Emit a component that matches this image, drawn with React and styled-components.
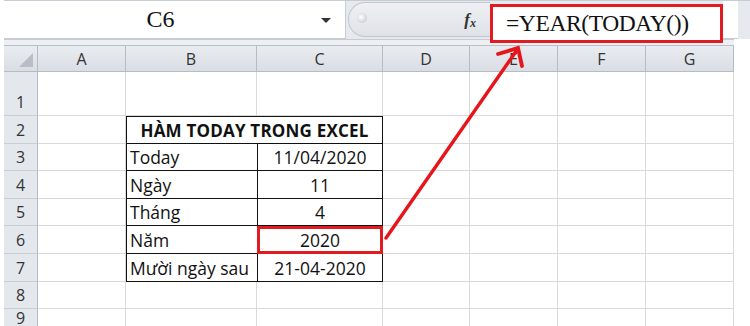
import React from "react";
import styled, { createGlobalStyle } from "styled-components";

const GlobalStyle = createGlobalStyle`
  html, body {
    margin: 0;
    padding: 0;
    background: #fff;
  }
  body {
    font-family: "Open Sans", "Liberation Sans", sans-serif;
  }
`;

const COLS = ["A", "B", "C", "D", "E", "F", "G"];
const COL_WIDTHS = [88, 131, 126, 87, 88, 88, 88];
const ROW_HEIGHTS = [44, 28, 27, 28, 27, 28, 28, 27, 18];

// table contents, keyed by row number
const TABLE = {
  3: ["Today", "11/04/2020"],
  4: ["Ngày", "11"],
  5: ["Tháng", "4"],
  6: ["Năm", "2020"],
  7: ["Mười ngày sau", "21-04-2020"],
};

const App = () => {
  return (
    <Page>
      <GlobalStyle />
      <FormulaBar>
        <NameBox>
          <NameText>C6</NameText>
          <DropArrow />
        </NameBox>
        <ButtonPill>
          <PillKnob />
          <FxLabel>
            f<sub>x</sub>
          </FxLabel>
        </ButtonPill>
        <FormulaInput>=YEAR(TODAY())</FormulaInput>
        <BarTail />
      </FormulaBar>
      <Splitter />

      <Sheet>
        <Corner>
          <CornerTriangle />
        </Corner>
        {COLS.map((c) => (
          <ColHeader key={c}>{c}</ColHeader>
        ))}

        {ROW_HEIGHTS.map((h, i) => {
          const row = i + 1;
          return (
            <React.Fragment key={row}>
              <RowHeader $tall={row === 1}>{row}</RowHeader>
              {row === 2 ? (
                <>
                  <Cell />
                  <TitleCell>HÀM TODAY TRONG EXCEL</TitleCell>
                  <Cell />
                  <Cell />
                  <Cell />
                  <Cell />
                </>
              ) : (
                COLS.map((c, ci) => {
                  const data = TABLE[row];
                  if (data && ci === 1) {
                    return (
                      <TableCell key={c} $bottom={row === 7}>
                        {data[0]}
                      </TableCell>
                    );
                  }
                  if (data && ci === 2) {
                    return (
                      <TableCell
                        key={c}
                        $center
                        $right
                        $bottom={row === 7}
                        $selected={row === 6}
                      >
                        {data[1]}
                      </TableCell>
                    );
                  }
                  return <Cell key={c} />;
                })
              )}
            </React.Fragment>
          );
        })}
      </Sheet>

      <ArrowLayer width="750" height="326" viewBox="0 0 750 326">
        <path
          d="M386 238 L517 50"
          stroke="#e8141c"
          strokeWidth="3.4"
          strokeLinecap="round"
          fill="none"
        />
        <path
          d="M498 54 L518 48 L522 66"
          stroke="#e8141c"
          strokeWidth="3.8"
          strokeLinecap="round"
          strokeLinejoin="miter"
          fill="none"
        />
      </ArrowLayer>
    </Page>
  );
};

export default App;

const Page = styled.div`
  position: relative;
  width: 750px;
  height: 326px;
  overflow: hidden;
  background: #fff;
`;

const FormulaBar = styled.div`
  display: flex;
  align-items: flex-start;
  height: 38px;
  margin-left: 4px;
  border-top: 1px solid #c6ccd4;
  background: #e6e9ee;
`;

const NameBox = styled.div`
  display: flex;
  align-items: center;
  align-self: stretch;
  width: 341px;
  background: #fff;
  border-right: 1px solid #c6ccd4;
  border-bottom: 1px solid #c6ccd4;
`;

const NameText = styled.div`
  flex: 1;
  text-align: center;
  font-family: "Liberation Serif", serif;
  font-size: 24px;
  color: #111;
  padding-left: 4px;
`;

const DropArrow = styled.div`
  width: 0;
  height: 0;
  margin: 2px 14px 0 8px;
  border-left: 5px solid transparent;
  border-right: 5px solid transparent;
  border-top: 5px solid #333;
`;

const ButtonPill = styled.div`
  position: relative;
  display: flex;
  align-items: center;
  justify-content: flex-end;
  align-self: stretch;
  width: 141px;
  margin: 1px 0 2px 2px;
  border-radius: 17px 0 0 17px;
  border: 1px solid #c2c7ce;
  border-right: none;
  background: linear-gradient(#eef0f3, #dfe2e7);
`;

const PillKnob = styled.div`
  position: absolute;
  left: 8px;
  top: 50%;
  width: 10px;
  height: 10px;
  margin-top: -7px;
  border-radius: 50%;
  background: radial-gradient(circle at 40% 40%, #ffffff, #b9bec6);
`;

const FxLabel = styled.div`
  font-family: "Liberation Serif", serif;
  font-style: italic;
  font-weight: bold;
  font-size: 17px;
  color: #333;
  margin-right: 14px;
  sub {
    font-size: 12px;
    vertical-align: baseline;
    position: relative;
    top: 2px;
  }
`;

const FormulaInput = styled.div`
  position: relative;
  z-index: 1;
  display: flex;
  align-items: center;
  width: 214px;
  height: 33px;
  margin-top: 3px;
  padding-left: 13px;
  background: #fff;
  border: 3px solid #e21a22;
  font-family: "Liberation Serif", serif;
  font-size: 23.5px;
  letter-spacing: -0.4px;
  color: #111;
  white-space: nowrap;
  overflow: hidden;
`;

const BarTail = styled.div`
  flex: 1;
  align-self: stretch;
  background: #fff;
  border-bottom: 1px solid #c6ccd4;
  margin-right: 12px;
`;

const Splitter = styled.div`
  height: 5px;
  margin-left: 4px;
  width: 730px;
  border-top: 1px solid #c6ccd4;
  border-bottom: 1px solid #b8bfc8;
  background: #eef0f3;
`;

const Sheet = styled.div`
  display: grid;
  margin-left: 4px;
  width: 730px;
  grid-template-columns: 34px ${COL_WIDTHS.map((w) => `${w}px`).join(" ")};
  grid-template-rows: 26px ${ROW_HEIGHTS.map((h) => `${h}px`).join(" ")};
  font-family: "Open Sans", "Liberation Sans", sans-serif;
`;

const headerBg = "linear-gradient(#e9ecf0, #dadee4)";

const Corner = styled.div`
  position: relative;
  background: ${headerBg};
  border-right: 1px solid #b5bcc6;
  border-bottom: 1px solid #b5bcc6;
`;

const CornerTriangle = styled.div`
  position: absolute;
  right: 4px;
  bottom: 4px;
  width: 0;
  height: 0;
  border-left: 14px solid transparent;
  border-bottom: 14px solid #b9bec6;
`;

const ColHeader = styled.div`
  display: flex;
  align-items: center;
  justify-content: center;
  background: ${headerBg};
  border-right: 1px solid #b5bcc6;
  border-bottom: 1px solid #b5bcc6;
  font-size: 16px;
  color: #333;
`;

const RowHeader = styled.div`
  display: flex;
  align-items: ${(p) => (p.$tall ? "flex-end" : "center")};
  justify-content: center;
  padding-bottom: ${(p) => (p.$tall ? "2px" : "0")};
  background: #e4e7ec;
  border-right: 1px solid #b5bcc6;
  border-bottom: 1px solid #c9ced6;
  font-size: 16px;
  color: #333;
`;

const Cell = styled.div`
  border-right: 1px solid #dadada;
  border-bottom: 1px solid #dadada;
`;

const TitleCell = styled.div`
  grid-column: span 2;
  display: flex;
  align-items: center;
  justify-content: center;
  border: 1.5px solid #111;
  border-bottom-width: 1px;
  font-weight: 700;
  font-size: 17px;
  letter-spacing: 0.2px;
  color: #111;
  white-space: nowrap;
`;

const TableCell = styled.div`
  display: flex;
  align-items: center;
  justify-content: ${(p) => (p.$center ? "center" : "flex-start")};
  padding-left: ${(p) => (p.$center ? "0" : "3px")};
  border-left: 1.5px solid #111;
  border-right: ${(p) => (p.$right ? "1.5px solid #111" : "none")};
  border-bottom: ${(p) => (p.$bottom ? "1.5px" : "1px")} solid #111;
  outline: ${(p) => (p.$selected ? "3px solid #e21a22" : "none")};
  outline-offset: -3px;
  font-size: 17.5px;
  color: #111;
  white-space: nowrap;
`;

const ArrowLayer = styled.svg`
  position: absolute;
  left: 0;
  top: 0;
  pointer-events: none;
`;
